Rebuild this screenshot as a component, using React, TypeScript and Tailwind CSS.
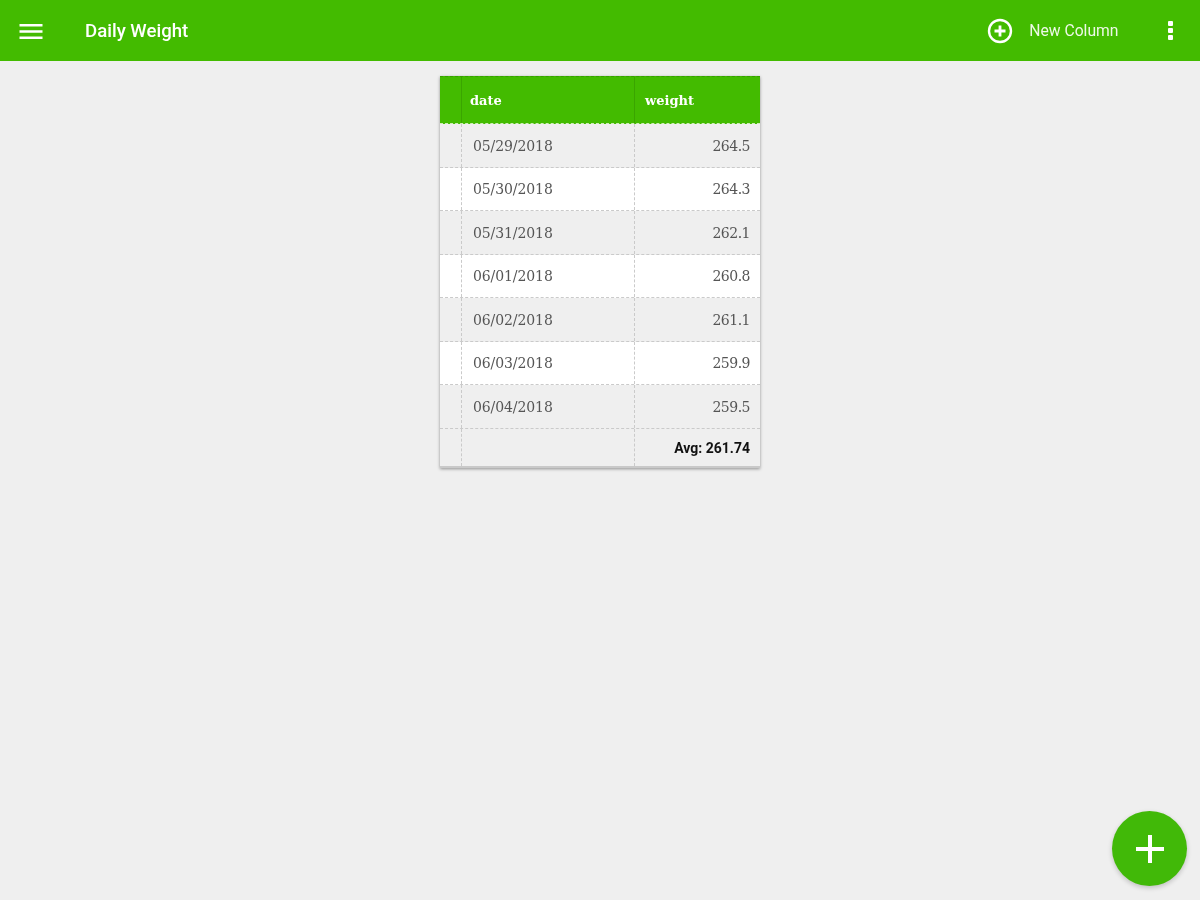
const rows: [string, string, boolean][] = [
  ["05/29/2018", "264.5", false],
  ["05/30/2018", "264.3", true],
  ["05/31/2018", "262.1", false],
  ["06/01/2018", "260.8", true],
  ["06/02/2018", "261.1", false],
  ["06/03/2018", "259.9", true],
  ["06/04/2018", "259.5", false],
];

export default function App() {
  return (
    <div className="relative flex h-[900px] w-[1200px] flex-col overflow-hidden bg-[#efefef] font-['Roboto',sans-serif]">
      <header className="flex h-[61px] shrink-0 items-center bg-[#43bb00] text-white">
        <div className="flex w-[85px] shrink-0 pl-[19px]">
          <svg width="24" height="24" viewBox="0 0 24 24" fill="none" stroke="#fff" strokeWidth="2.5" className="blur-[0.4px]">
            <path d="M0.5 6.2h23M0.5 12.5h23M0.5 18.8h23" />
          </svg>
        </div>
        <div className="pt-[2px] text-[18.6px] font-medium leading-none text-white blur-[0.4px]">Daily Weight</div>
        <div className="ml-auto flex items-center">
          <svg width="26" height="26" viewBox="0 0 26 26" fill="none" stroke="#fff" className="blur-[0.4px]">
            <circle cx="13" cy="13" r="11" strokeWidth="2.4" />
            <path d="M13 7.5v11M7.5 13h11" strokeWidth="2.8" />
          </svg>
          <div className="ml-[16px] text-[15.7px] leading-none text-white/90 blur-[0.4px]">New Column</div>
          <div className="ml-[49px] mr-[27.5px] flex flex-col gap-[2px] blur-[0.4px]">
            <span className="size-[5px] rounded-[1px] bg-white" />
            <span className="size-[5px] rounded-[1px] bg-white" />
            <span className="size-[5px] rounded-[1px] bg-white" />
          </div>
        </div>
      </header>

      <div className="ml-[440px] mt-[15px] w-[320px] bg-[#efefef] font-['DejaVu_Serif',serif] shadow-[0_1px_3px_rgba(0,0,0,0.4)]">
        <div className="flex h-[48px] items-center border-t border-b border-t-[#37a000] border-b-[#cfeeba] border-dashed bg-[#43bb00] text-[13px] font-bold text-white">
          <div className="h-full w-[22px] border-r border-[#3aa500]" />
          <div className="flex h-full w-[173px] items-center border-r border-[#3aa500] pl-[8px] pt-[2px] blur-[0.4px]">date</div>
          <div className="flex h-full flex-1 items-center pl-[10px] pt-[2px] blur-[0.4px]">weight</div>
        </div>
        {rows.map(([date, weight, white]) => (
          <div
            key={date}
            className={`flex h-[43.5px] border-b border-dashed border-[#cacaca] text-[14px] text-[#555] ${white ? "bg-white" : "bg-[#efefef]"}`}
          >
            <div className="h-full w-[22px] border-r border-dashed border-[#cacaca]" />
            <div className="flex h-full w-[173px] items-center border-r border-dashed border-[#cacaca] pl-[11px] pt-[2px] tracking-[-0.1px]">
              <span className="blur-[0.45px]">{date}</span>
            </div>
            <div className="flex h-full flex-1 items-center justify-end pr-[10px] pt-[2px] tracking-[-0.5px]">
              <span className="blur-[0.45px]">{weight}</span>
            </div>
          </div>
        ))}
        <div className="flex h-[39px] border-b-2 border-[#c9c9c9]">
          <div className="h-full w-[22px] border-r border-dashed border-[#cacaca]" />
          <div className="h-full w-[173px] border-r border-dashed border-[#cacaca]" />
          <div className="flex h-full flex-1 items-center justify-end pr-[10px] pt-[2px] font-['Roboto',sans-serif] text-[14px] font-bold text-[#111]">
            <span className="blur-[0.4px]">Avg: 261.74</span>
          </div>
        </div>
      </div>

      <button className="absolute left-[1112px] top-[811px] flex size-[75px] items-center justify-center rounded-full bg-[#41b908] shadow-[0_2px_5px_rgba(0,0,0,0.2)]">
        <svg width="28" height="28" viewBox="0 0 28 28" fill="none" stroke="#fff" strokeWidth="4">
          <path d="M14 0v28M0 14h28" />
        </svg>
      </button>
    </div>
  );
}
